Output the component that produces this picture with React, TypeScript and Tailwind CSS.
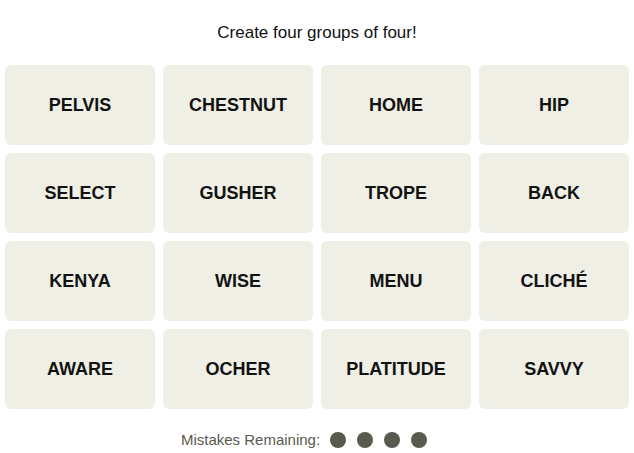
import React from "react";

const words = [
  "PELVIS", "CHESTNUT", "HOME", "HIP",
  "SELECT", "GUSHER", "TROPE", "BACK",
  "KENYA", "WISE", "MENU", "CLICHÉ",
  "AWARE", "OCHER", "PLATITUDE", "SAVVY",
];

export default function App() {
  return (
    <div className="w-[634px] h-[453px] bg-white flex flex-col items-center" style={{ fontFamily: '"Liberation Sans", Arial, sans-serif' }}>
      <div className="mt-[21px] h-[24px] leading-[24px] text-[17px] text-[#121212]">Create four groups of four!</div>
      <div className="mt-[20px] grid grid-cols-[repeat(4,150px)] grid-rows-[repeat(4,80px)] gap-[8px]">
        {words.map((w) => (
          <div key={w} className="bg-[#efefe6] rounded-[6px] flex items-center justify-center text-[18px] font-bold text-[#121212]">
            {w}
          </div>
        ))}
      </div>
      <div className="mt-[23px] mr-[26px] flex items-center h-[16px] text-[15px] text-[#5a594e]">
        <span className="mr-[10px]">Mistakes Remaining:</span>
        <div className="flex gap-[11px]">
          <span className="w-[16px] h-[16px] rounded-full bg-[#5a594e]" />
          <span className="w-[16px] h-[16px] rounded-full bg-[#5a594e]" />
          <span className="w-[16px] h-[16px] rounded-full bg-[#5a594e]" />
          <span className="w-[16px] h-[16px] rounded-full bg-[#5a594e]" />
        </div>
      </div>
    </div>
  );
}
